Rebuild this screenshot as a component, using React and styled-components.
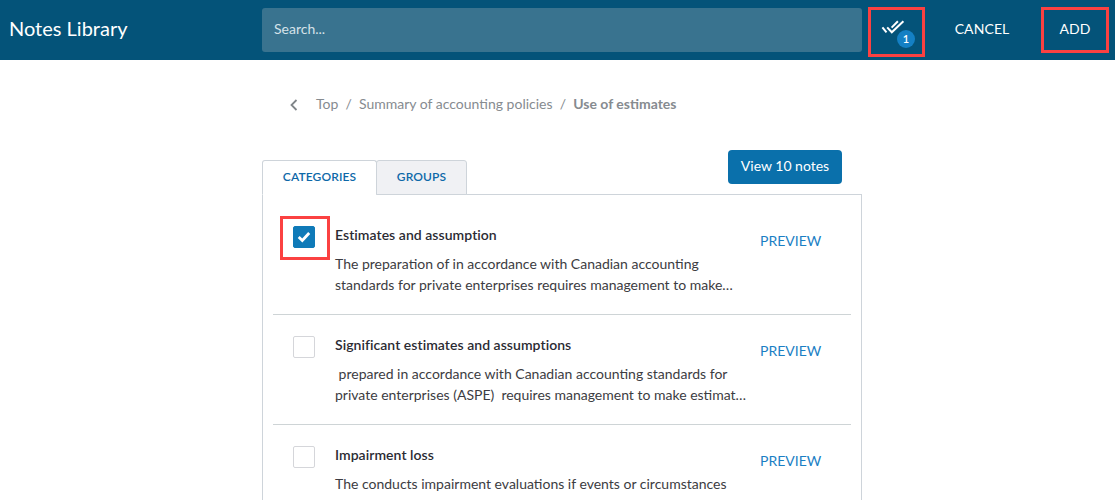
import React from "react";
import styled, { createGlobalStyle } from "styled-components";

const GlobalStyle = createGlobalStyle`
  * { box-sizing: border-box; }
  html, body { margin: 0; height: 500px; overflow: hidden; background: #fff; }
  body { font-family: Lato, "Liberation Sans", sans-serif; font-size: 14px; color: #333; }
  button { font-family: inherit; border: 0; margin: 0; padding: 0; background: none; }
`;

const Page = styled.div`
  height: 500px;
  overflow: hidden;
`;

const TopBar = styled.header`
  height: 60px;
  background: #045379;
  display: grid;
  grid-template-columns: 262px 600px 6px 57px 116px 68px;
  align-items: start;
  color: #fff;
`;

const Brand = styled.h1`
  margin: 0;
  padding-left: 9px;
  font-size: 20px;
  font-weight: 400;
  line-height: 56px;
`;

const SearchField = styled.div`
  margin-top: 8px;
  height: 44px;
  padding-left: 12px;
  line-height: 42px;
  border-radius: 3px;
  background: #39738f;
  color: #d5e2e9;
`;

const Highlight = styled.div`
  width: ${(p) => p.$w}px;
  height: ${(p) => p.$h}px;
  border: 3px solid #fb4141;
  display: flex;
  align-items: center;
  justify-content: center;
  flex: none;
`;

const BarSlot = styled.div`
  padding-top: 7px;
  grid-column: ${(p) => p.$col};
`;

const BarButton = styled.button`
  height: 44px;
  padding-bottom: 2px;
  line-height: 42px;
  font-size: 14px;
  letter-spacing: 0.08px;
  color: #fff;
`;

const CancelButton = styled(BarButton)`
  margin-top: 8px;
  padding-right: 2px;
  grid-column: 5;
`;

const Selected = styled.div`
  position: relative;
  width: 51px;
  height: 44px;
`;

const SelectedIcon = styled.svg`
  display: block;
  margin: 10px 0 0 10px;
`;

const Count = styled.span`
  position: absolute;
  left: 26px;
  top: 20px;
  width: 18px;
  height: 18px;
  border-radius: 50%;
  background: #1480c4;
  font-size: 11px;
  font-weight: 600;
  line-height: 18px;
  text-align: center;
`;

const Content = styled.main`
  width: 600px;
  margin-left: 262px;
`;

const Breadcrumb = styled.nav`
  display: flex;
  align-items: center;
  height: 20px;
  margin-top: 33px;
  padding-left: 27px;
  color: #868b90;
  white-space: pre;
`;

const BackIcon = styled.svg`
  margin: 3px 17px 0 0;
`;

const Slash = styled.span`
  width: 20.6px;
  text-align: center;
`;

const Current = styled.b`
  font-weight: 700;
`;

const TabRow = styled.div`
  display: flex;
  align-items: flex-end;
  height: 45px;
  margin-top: 37px;
`;

const Tab = styled.button`
  width: ${(p) => p.$w}px;
  height: 35px;
  margin-left: ${(p) => (p.$active ? 0 : -1)}px;
  padding-bottom: 2px;
  border: 1px solid #ced4da;
  border-bottom-color: ${(p) => (p.$active ? "#fff" : "#ced4da")};
  border-radius: 3px 3px 0 0;
  background: ${(p) => (p.$active ? "#fff" : "#f0f1f4")};
  color: #0d68a8;
  font-size: 12px;
  font-weight: 600;
  letter-spacing: 0.12px;
  z-index: 1;
`;

const ViewButton = styled.button`
  width: 114px;
  height: 34px;
  margin: 0 20px 11px auto;
  padding-bottom: 2px;
  border-radius: 4px;
  background: #0a70ab;
  color: #fff;
  font-size: 14px;
  line-height: 32px;
`;

const Panel = styled.section`
  height: 400px;
  margin-top: -1px;
  padding: 0 10px;
  border: 1px solid #ced4da;
`;

const Note = styled.article`
  display: flex;
  height: ${(p) => (p.$first ? 120 : 110)}px;
  padding-top: ${(p) => (p.$first ? 21 : 11)}px;
  border-bottom: 1px solid #ced4d6;
`;

const CheckCell = styled.div`
  width: 62px;
  padding-left: 7px;
  flex: none;
`;

const Frame = styled(Highlight)`
  width: 50px;
  height: 44px;
  border-color: ${(p) => (p.$on ? "#fb4141" : "transparent")};
  padding-right: 2px;
  padding-bottom: 2px;
`;

const Box = styled.span`
  display: flex;
  align-items: center;
  justify-content: center;
  width: 22px;
  height: 22px;
  border-radius: 2px;
  border: 1px solid ${(p) => (p.$on ? "#0f7ab8" : "#d5d6da")};
  background: ${(p) => (p.$on ? "#0f7ab8" : "#fff")};
`;

const NoteText = styled.div`
  width: 425px;
  flex: none;
`;

const NoteTitle = styled.h2`
  margin: 0;
  padding-top: 9px;
  font-size: 14px;
  line-height: 20px;
  font-weight: 600;
  letter-spacing: 0.05px;
  color: #2b2b33;
`;

const NoteBody = styled.p`
  margin: 8px 0 0;
  line-height: 21px;
  white-space: pre;
  color: #3c3c42;
`;

const Line = styled.span`
  display: block;
`;

const Preview = styled.button`
  align-self: flex-start;
  padding-top: 14px;
  line-height: 22px;
  font-size: 14px;
  color: #1b7fc4;
`;

const notes = [
  {
    title: "Estimates and assumption",
    checked: true,
    lines: [
      "The preparation of in accordance with Canadian accounting",
      "standards for private enterprises requires management to make…",
    ],
  },
  {
    title: "Significant estimates and assumptions",
    lines: [
      " prepared in accordance with Canadian accounting standards for",
      "private enterprises (ASPE)  requires management to make estimat…",
    ],
  },
  {
    title: "Impairment loss",
    lines: [
      "The conducts impairment evaluations if events or circumstances",
      "indicate that an asset may be impaired and the carrying value",
    ],
  },
];

export default function App() {
  return (
    <Page>
      <GlobalStyle />
      <TopBar>
        <Brand>Notes Library</Brand>
        <SearchField>Search...</SearchField>
        <BarSlot $col="4">
          <Highlight $w={57} $h={50}>
            <Selected>
              <SelectedIcon width="25" height="16" viewBox="0 0 25 16" fill="none" stroke="#fff" strokeWidth="2">
                <path d="M1.4 7.4 5.5 12.4M6.2 7.4 10.8 12.3 22.4 1.3M10.6 7.6 16.9 1.3" />
              </SelectedIcon>
              <Count>1</Count>
            </Selected>
          </Highlight>
        </BarSlot>
        <CancelButton>CANCEL</CancelButton>
        <BarSlot $col="6">
          <Highlight $w={68} $h={46}>
            <BarButton>ADD</BarButton>
          </Highlight>
        </BarSlot>
      </TopBar>
      <Content>
        <Breadcrumb>
          <BackIcon width="10" height="12" viewBox="0 0 10 12" fill="none" stroke="#808589" strokeWidth="1.8">
            <path d="M7.5 1 2.5 6 7.5 11" />
          </BackIcon>
          <span>Top</span>
          <Slash>/</Slash>
          <span>Summary of accounting policies</span>
          <Slash>/</Slash>
          <Current>Use of estimates</Current>
        </Breadcrumb>
        <TabRow>
          <Tab $w={115} $active>CATEGORIES</Tab>
          <Tab $w={91}>GROUPS</Tab>
          <ViewButton>View 10 notes</ViewButton>
        </TabRow>
        <Panel>
          {notes.map((note, i) => (
            <Note key={note.title} $first={i === 0}>
              <CheckCell>
                <Frame $on={note.checked}>
                  <Box $on={note.checked}>
                    {note.checked && (
                      <svg width="14" height="12" viewBox="0 0 14 12" fill="none" stroke="#fff" strokeWidth="2.8">
                        <path d="M1.7 6 5.3 9.5 12.2 2" />
                      </svg>
                    )}
                  </Box>
                </Frame>
              </CheckCell>
              <NoteText>
                <NoteTitle>{note.title}</NoteTitle>
                <NoteBody>
                  {note.lines.map((line) => (
                    <Line key={line}>{line}</Line>
                  ))}
                </NoteBody>
              </NoteText>
              <Preview>PREVIEW</Preview>
            </Note>
          ))}
        </Panel>
      </Content>
    </Page>
  );
}
